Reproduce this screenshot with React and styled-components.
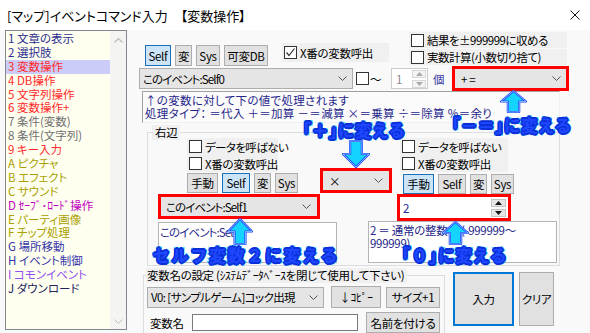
import React from 'react';
import styled, { createGlobalStyle } from 'styled-components';

const GlobalStyle = createGlobalStyle`
  html, body { margin: 0; padding: 0; background: #fff; }
  #root { width: 590px; height: 333px; overflow: hidden; }
  * { box-sizing: border-box; }
`;

const FONT = `"Noto Sans CJK JP", "Noto Sans", sans-serif`;

const Window = styled.div`
  position: relative;
  width: 590px;
  height: 333px;
  overflow: hidden;
  background: #fff;
  font-family: ${FONT};
  font-size: 11.5px;
  letter-spacing: -0.3px;
  font-feature-settings: "palt";
  color: #000;
`;

const TitleBar = styled.div`
  height: 30px;
  display: flex;
  align-items: center;
  justify-content: space-between;
  padding: 0 10px 0 7px;
  letter-spacing: 0;
  .title { font-size: 13px; }
`;

const Body = styled.div`
  display: flex;
  align-items: flex-start;
  height: 303px;
  background: #f9f9f9;
  padding-left: 5px;
`;

/* ---------- command list ---------- */
const CommandList = styled.div`
  width: 122px;
  height: 300px;
  flex-shrink: 0;
  border: 1px solid #828790;
  background: #fffff0;
  display: flex;
`;

const Items = styled.div`
  flex: 1;
  padding-top: 1px;
`;

const Item = styled.div`
  height: 13.9px;
  line-height: 13.9px;
  padding-left: 2px;
  white-space: nowrap;
  letter-spacing: 0;
  color: ${p => p.$color};
  background: ${p => (p.$selected ? '#ccccf8' : 'transparent')};
`;

const Scrollbar = styled.div`
  width: 16px;
  background: #f4f4f2;
  display: flex;
  flex-direction: column;
  justify-content: space-between;
  align-items: center;
  padding: 7px 0 5px;
`;

/* ---------- main panel ---------- */
const Main = styled.div`
  margin-left: 12px;
  width: 440px;
  padding-top: 2px;
  display: flex;
  flex-direction: column;
  & > * { flex-shrink: 0; }
`;

const Row = styled.div`
  display: flex;
  align-items: ${p => p.$align || 'flex-start'};
  height: ${p => (p.$h ? p.$h + 'px' : 'auto')};
  margin-top: ${p => p.$mt || 0}px;
  margin-left: ${p => p.$ml || 0}px;
`;

const Stack = styled.div`
  display: flex;
  flex-direction: column;
  gap: ${p => p.$gap || 0}px;
  width: ${p => (p.$w ? p.$w + 'px' : 'auto')};
  margin-left: ${p => p.$ml || 0}px;
  margin-top: ${p => p.$mt || 0}px;
`;

const ButtonRow = styled.div`
  display: flex;
  gap: 4px;
  margin-left: ${p => p.$ml || 0}px;
  margin-top: ${p => p.$mt || 0}px;
`;

const Btn = styled.div`
  width: ${p => p.$w}px;
  height: ${p => p.$h || 21}px;
  margin-left: ${p => p.$ml || 0}px;
  margin-top: ${p => p.$mt || 0}px;
  display: flex;
  align-items: center;
  justify-content: center;
  flex-shrink: 0;
  white-space: nowrap;
  background: ${p => (p.$active ? '#cce4f7' : '#e1e1e1')};
  border: ${p => (p.$default ? '2px solid #0078d7' : `1px solid ${p.$active ? '#1a6fb8' : '#adadad'}`)};
`;

const CheckBand = styled.div`
  display: flex;
  align-items: center;
  gap: 3px;
  width: ${p => p.$w}px;
  height: ${p => p.$h || 17}px;
  margin-left: ${p => p.$ml || 0}px;
  margin-top: ${p => p.$mt || 0}px;
  padding-left: 2px;
  background: #f0f0f0;
  white-space: nowrap;
  letter-spacing: ${p => p.$ls ?? -0.3}px;
`;

const Box = styled.span`
  width: 13px;
  height: 13px;
  flex-shrink: 0;
  border: 1px solid #333;
  background: #fff;
  display: inline-flex;
  margin-left: ${p => p.$ml || 0}px;
`;

const Select = styled.div`
  width: ${p => (p.$w ? p.$w + 'px' : '100%')};
  height: ${p => (p.$h ? p.$h + 'px' : '100%')};
  flex-shrink: 0;
  display: flex;
  align-items: center;
  justify-content: space-between;
  padding: 0 ${p => p.$pr || 5}px 0 ${p => p.$pl || 3}px;
  background: #e5e5e5;
  border: 1px solid ${p => (p.$bare ? '#e5e5e5' : '#adadad')};
  white-space: nowrap;
  letter-spacing: ${p => p.$ls ?? -0.3}px;
`;

const RedFrame = styled.div`
  width: ${p => p.$w}px;
  height: ${p => p.$h}px;
  flex-shrink: 0;
  margin-left: ${p => p.$ml || 0}px;
  margin-top: ${p => p.$mt || 0}px;
  border: 3px solid #ff0000;
  display: flex;
`;

const Label = styled.span`
  flex-shrink: 0;
  width: ${p => (p.$w ? p.$w + 'px' : 'auto')};
  margin-left: ${p => p.$ml || 0}px;
  color: ${p => p.$color || '#000'};
  white-space: nowrap;
`;

const Spin = styled.div`
  width: ${p => p.$w}px;
  height: ${p => p.$h}px;
  flex-shrink: 0;
  margin-left: ${p => p.$ml || 0}px;
  display: flex;
  align-items: center;
  justify-content: space-between;
  background: #fff;
  border: 1px solid ${p => (p.$disabled ? '#cccccc' : '#fff')};
  padding: 0 1px 0 ${p => p.$pl || 4}px;
  color: ${p => (p.$disabled ? '#8a8a8a' : '#2424a0')};
`;

const SpinButtons = styled.div`
  display: flex;
  flex-direction: column;
  gap: 2px;
`;

const SpinButton = styled.div`
  width: ${p => p.$w}px;
  height: 8px;
  display: flex;
  align-items: center;
  justify-content: center;
  background: ${p => (p.$disabled ? '#f4f4f4' : '#e6e6e6')};
  border: 1px solid ${p => (p.$disabled ? '#d6d6d6' : '#c4c4c4')};
`;

const InfoBox = styled.div`
  margin-left: 3px;
  width: 418px;
  height: 32px;
  padding: 2px 0 0 2px;
  line-height: 13px;
  letter-spacing: 0.3px;
  color: #26268a;
  background: #fbfbfb;
  border-top: 1px solid #a0a0a0;
  border-left: 1px solid #a0a0a0;
  border-right: 1px solid #f0f0f0;
  border-bottom: 1px solid #f0f0f0;
  white-space: nowrap;
  overflow: hidden;
`;

const Group = styled.div`
  position: relative;
  width: ${p => p.$w}px;
  height: ${p => p.$h}px;
  flex-shrink: 0;
  margin-left: ${p => p.$ml || 0}px;
  margin-top: ${p => p.$mt || 0}px;
  border: 1px solid #dcdcdc;
`;

const Legend = styled.span`
  position: absolute;
  top: ${p => p.$top}px;
  left: ${p => p.$left}px;
  height: 15px;
  line-height: 15px;
  padding: 0 3px 0 ${p => p.$pl || 3}px;
  background: #f0f0f0;
  white-space: nowrap;
`;

const TextBox = styled.div`
  width: ${p => p.$w}px;
  height: ${p => p.$h}px;
  flex-shrink: 0;
  margin-left: ${p => p.$ml || 0}px;
  margin-top: ${p => p.$mt || 0}px;
  padding: ${p => p.$pt || 3}px 0 0 1px;
  line-height: 13px;
  color: #26268a;
  background: #fff;
  border: 1px solid #b4b4b4;
  white-space: nowrap;
  overflow: hidden;
  letter-spacing: ${p => p.$ls ?? -0.3}px;
`;

const Input = styled.div`
  width: ${p => p.$w}px;
  height: ${p => p.$h}px;
  margin-left: ${p => p.$ml || 0}px;
  flex-shrink: 0;
  background: #fff;
  border: 1px solid #7a7a7a;
`;

/* ---------- annotation overlay ---------- */
const Callout = styled.div`
  position: absolute;
  left: ${p => p.$x}px;
  top: ${p => p.$y}px;
  font-family: ${FONT};
  font-feature-settings: normal;
  font-weight: 700;
  font-size: ${p => p.$size || 16.5}px;
  letter-spacing: ${p => p.$ls ?? 0.6}px;
  line-height: 1;
  white-space: nowrap;
  color: #1d48ff;
  -webkit-text-stroke: 3.4px #3fd9ff;
  paint-order: stroke fill;
  text-shadow: 1.6px 0 #0d2fd8, -1.6px 0 #0d2fd8, 0 1.6px #0d2fd8, 0 -1.6px #0d2fd8,
    1.1px 1.1px #0d2fd8, -1.1px -1.1px #0d2fd8, 1.1px -1.1px #0d2fd8, -1.1px 1.1px #0d2fd8;
`;

const ArrowSvg = styled.svg`
  position: absolute;
  left: ${p => p.$x}px;
  top: ${p => p.$y}px;
  overflow: visible;
`;

const Chevron = ({ color = '#555' }) => (
  <svg width="9" height="5" viewBox="0 0 9 5">
    <polyline points="0.5,0.5 4.5,4.5 8.5,0.5" fill="none" stroke={color} strokeWidth="1" />
  </svg>
);

const Tri = ({ up, color }) => (
  <svg width="7" height="4" viewBox="0 0 7 4">
    <polygon points={up ? '3.5,0 7,4 0,4' : '0,0 7,0 3.5,4'} fill={color} />
  </svg>
);

const Check = ({ checked }) => (
  <Box>
    {checked && (
      <svg width="11" height="11" viewBox="0 0 11 11">
        <polyline points="1.5,5.5 4,8.5 9.5,1.5" fill="none" stroke="#333" strokeWidth="1.2" />
      </svg>
    )}
  </Box>
);

const Arrow = ({ x, y, w, h, dir }) => {
  const hh = h * 0.5;
  const sw = w * 0.42;
  const c = w / 2;
  const up = [
    [c, 1], [w - 1, hh], [c + sw / 2, hh], [c + sw / 2, h - 1],
    [c - sw / 2, h - 1], [c - sw / 2, hh], [1, hh],
  ];
  const pts = (dir === 'down' ? up.map(([px, py]) => [px, h - py]) : up)
    .map(p => p.join(','))
    .join(' ');
  return (
    <ArrowSvg $x={x} $y={y} width={w} height={h} viewBox={`0 0 ${w} ${h}`}>
      <polygon points={pts} fill="#14d4ff" stroke="#1846ff" strokeWidth="2.2" strokeLinejoin="round" />
      <polygon points={pts} fill="none" stroke="#c8f6ff" strokeWidth="0.6" strokeLinejoin="round" />
    </ArrowSvg>
  );
};

const commands = [
  ['1 文章の表示', '#2d2d90'],
  ['2 選択肢', '#2d2d90'],
  ['3 変数操作', '#ff2a2a', true],
  ['4 DB操作', '#ff2a2a'],
  ['5 文字列操作', '#ff2a2a'],
  ['6 変数操作+', '#ff2a2a'],
  ['7 条件(変数)', '#707070'],
  ['8 条件(文字列)', '#707070'],
  ['9 キー入力', '#ff2a2a'],
  ['A ピクチャ', '#a9a000'],
  ['B エフェクト', '#a9a000'],
  ['C サウンド', '#a9a000'],
  ['D ｾｰﾌﾞ･ﾛｰﾄﾞ操作', '#c000c0'],
  ['E パーティ画像', '#a9a000'],
  ['F チップ処理', '#a9a000'],
  ['G 場所移動', '#3434a8'],
  ['H イベント制御', '#3434a8'],
  ['I コモンイベント', '#9050f0'],
  ['J ダウンロード', '#24245c'],
];

const SourceButtons = ({ active, ml, mt }) => (
  <ButtonRow $ml={ml} $mt={mt}>
    <Btn $w={31} $h={20} $active={active === '手動'}>手動</Btn>
    <Btn $w={28} $h={20} $active={active === 'Self'}>Self</Btn>
    <Btn $w={17} $h={20}>変</Btn>
    <Btn $w={23} $h={20}>Sys</Btn>
  </ButtonRow>
);

export default function App() {
  return (
    <Window>
      <GlobalStyle />
      <TitleBar>
        <span className="title">[マップ]イベントコマンド入力　【変数操作】</span>
        <svg width="10" height="10" viewBox="0 0 10 10">
          <path d="M0.5 0.5 L9.5 9.5 M9.5 0.5 L0.5 9.5" stroke="#111" strokeWidth="1" />
        </svg>
      </TitleBar>

      <Body>
        <CommandList>
          <Items>
            {commands.map(([text, color, sel]) => (
              <Item key={text} $color={color} $selected={sel}>{text}</Item>
            ))}
          </Items>
          <Scrollbar>
            <svg width="9" height="5" viewBox="0 0 9 5">
              <polyline points="0.5,4.5 4.5,0.5 8.5,4.5" fill="none" stroke="#bcbcbc" strokeWidth="1.2" />
            </svg>
            <Chevron color="#bcbcbc" />
          </Scrollbar>
        </CommandList>

        <Main>
          {/* target variable buttons + options */}
          <Row $h={34}>
            <ButtonRow $ml={6} $mt={13}>
              <Btn $w={26} $active>Self</Btn>
              <Btn $w={17}>変</Btn>
              <Btn $w={24}>Sys</Btn>
              <Btn $w={44}>可変DB</Btn>
            </ButtonRow>
            <CheckBand $w={107} $h={19} $ml={14} $mt={11}>
              <Check checked />X番の変数呼出
            </CheckBand>
            <Stack $ml={20} $gap={1}>
              <CheckBand $w={158} $h={16} $ls={-0.5}>
                <Check />結果を±999999に収める
              </CheckBand>
              <CheckBand $w={158} $h={16} $ls={-0.5}>
                <Check />実数計算(小数切り捨て)
              </CheckBand>
            </Stack>
          </Row>

          <Row $h={25} $align="center">
            <Select $w={214} $h={21} $ls={-0.9}>
              <span>このイベント:Self0</span>
              <Chevron />
            </Select>
            <Box $ml={3} />
            <Label $w={12} $ml={1}>～</Label>
            <Spin $w={37} $h={21} $ml={9} $disabled>
              <span>1</span>
              <SpinButtons>
                <SpinButton $w={14} $disabled><Tri up color="#a8a8a8" /></SpinButton>
                <SpinButton $w={14} $disabled><Tri color="#a8a8a8" /></SpinButton>
              </SpinButtons>
            </Spin>
            <Label $w={12} $ml={5} $color="#3a3aa0">個</Label>
            <RedFrame $w={117} $h={25} $ml={7}>
              <Select $bare $pl={5} $pr={4}>
                <span>+ =</span>
                <Chevron />
              </Select>
            </RedFrame>
          </Row>

          <InfoBox>
            ↑の変数に対して下の値で処理されます
            <br />
            処理タイプ： ＝代入 ＋＝加算 －＝減算 ×＝乗算 ÷＝除算 %＝余り
          </InfoBox>

          {/* right-hand side */}
          <Group $w={413} $h={134} $ml={8} $mt={9}>
            <Legend $top={-8} $left={4}>右辺</Legend>
            <Row $mt={5} $ml={10}>
              <Stack $w={162}>
                <CheckBand $w={91} $ml={29} $ls={-0.6}><Check />データを呼ばない</CheckBand>
                <CheckBand $w={91} $ml={29}><Check />X番の変数呼出</CheckBand>
                <SourceButtons active="Self" ml={29} mt={1} />
                <RedFrame $w={162} $h={25} $mt={1}>
                  <Select $bare $pl={4} $pr={5} $ls={-0.9}>
                    <span>このイベント:Self1</span>
                    <Chevron />
                  </Select>
                </RedFrame>
              </Stack>
              <RedFrame $w={72} $h={25} $mt={30}>
                <Select $bare $pl={5} $pr={5}>
                  <span>×</span>
                  <Chevron />
                </Select>
              </RedFrame>
              <Stack $ml={5}>
                <CheckBand $w={108} $ml={3} $ls={-0.6}><Check />データを呼ばない</CheckBand>
                <CheckBand $w={108} $ml={3}><Check />X番の変数呼出</CheckBand>
                <SourceButtons active="手動" ml={6} mt={2} />
                <RedFrame $w={114} $h={27}>
                  <Spin $w={108} $h={21} $pl={2}>
                    <span>2</span>
                    <SpinButtons>
                      <SpinButton $w={15}><Tri up color="#111" /></SpinButton>
                      <SpinButton $w={15}><Tri color="#111" /></SpinButton>
                    </SpinButtons>
                  </Spin>
                </RedFrame>
              </Stack>
            </Row>
            <Row $ml={10}>
              <TextBox $w={179} $h={41} $mt={1} $pt={3} $ls={-0.9}>このイベント:Self1</TextBox>
              <TextBox $w={189} $h={42} $ml={31} $pt={2}>
                2 ＝ 通常の整数値 (-999999～
                <br />
                999999)
              </TextBox>
            </Row>
          </Group>

          <Row $mt={2}>
            <Group $w={302} $h={72} $ml={4} $mt={7}>
              <Legend $top={-8} $left={2} $pl={1}>
                変数名の設定 (ｼｽﾃﾑﾃﾞｰﾀﾍﾞｰｽを閉じて使用して下さい)
              </Legend>
              <Row $mt={10} $ml={3} $align="center">
                <Select $w={177} $h={21} $ls={-0.6}>
                  <span>V0: [サンプルゲーム]コック出現</span>
                  <Chevron />
                </Select>
                <Btn $w={50} $h={22} $ml={7}>↓ｺﾋﾟｰ</Btn>
                <Btn $w={54} $ml={5}>サイズ+1</Btn>
              </Row>
              <Row $mt={4} $ml={3} $align="center">
                <Label $w={42} $ml={3}>変数名</Label>
                <Input $w={166} $h={17} />
                <Btn $w={74} $ml={8}>名前を付ける</Btn>
              </Row>
            </Group>
            <Btn $w={61} $h={54} $ml={8} $mt={4} $default>入力</Btn>
            <Btn $w={35} $h={54} $ml={5} $mt={4}>クリア</Btn>
          </Row>
        </Main>
      </Body>

      {/* instruction overlay */}
      <Callout $x={303} $y={122}>｢＋｣に変える</Callout>
      <Arrow x={342} y={140} w={28} h={28} dir="down" />
      <Arrow x={500} y={90} w={27} h={23} dir="up" />
      <Callout $x={452} $y={117}>｢－＝｣に変える</Callout>
      <Arrow x={227} y={218} w={26} h={27} dir="up" />
      <Callout $x={153} $y={247} $ls={2.2}>セルフ変数２に変える</Callout>
      <Arrow x={442} y={221} w={27} h={24} dir="up" />
      <Callout $x={402} $y={247} $ls={1}>｢０｣に変える</Callout>
    </Window>
  );
}
